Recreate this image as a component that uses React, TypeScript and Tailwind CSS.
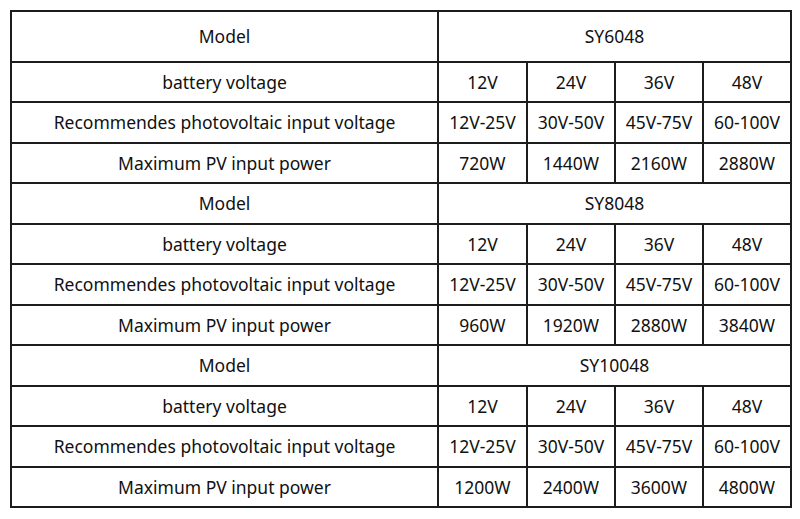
import { Fragment } from "react";

const models = [
  {
    name: "SY6048",
    power: ["720W", "1440W", "2160W", "2880W"],
  },
  {
    name: "SY8048",
    power: ["960W", "1920W", "2880W", "3840W"],
  },
  {
    name: "SY10048",
    power: ["1200W", "2400W", "3600W", "4800W"],
  },
];

const voltages = ["12V", "24V", "36V", "48V"];
const pvRanges = ["12V-25V", "30V-50V", "45V-75V", "60-100V"];

const cell = "border-2 border-[#1c1c1c] text-center p-0 whitespace-nowrap";

const App = () => {
  return (
    <div
      className="w-[800px] h-[519px] bg-white pl-[10px] pt-[10px] text-[#111] text-[17.5px]"
      style={{ fontFamily: '"Noto Sans", "Open Sans", sans-serif' }}
    >
      <table className="border-collapse table-fixed w-[780px]">
        <colgroup>
          <col className="w-[427px]" />
          <col className="w-[89px]" />
          <col className="w-[88px]" />
          <col className="w-[88px]" />
          <col className="w-[88px]" />
        </colgroup>
        <tbody>
          {models.map((m, i) => (
            <Fragment key={m.name}>
              {/* Model header */}
              <tr className={i === 0 ? "h-[51px]" : "h-[41px]"}>
                <td className={cell}>Model</td>
                <td className={cell} colSpan={4}>
                  {m.name}
                </td>
              </tr>
              <tr className="h-[40px]">
                <td className={cell}>battery voltage</td>
                {voltages.map((v) => (
                  <td key={v} className={cell}>
                    {v}
                  </td>
                ))}
              </tr>
              <tr className="h-[41px]">
                <td className={cell}>Recommendes photovoltaic input voltage</td>
                {pvRanges.map((v) => (
                  <td key={v} className={cell}>
                    {v}
                  </td>
                ))}
              </tr>
              <tr className="h-[40px]">
                <td className={cell}>Maximum PV input power</td>
                {m.power.map((v) => (
                  <td key={v} className={cell}>
                    {v}
                  </td>
                ))}
              </tr>
            </Fragment>
          ))}
        </tbody>
      </table>
    </div>
  );
};

export default App;
